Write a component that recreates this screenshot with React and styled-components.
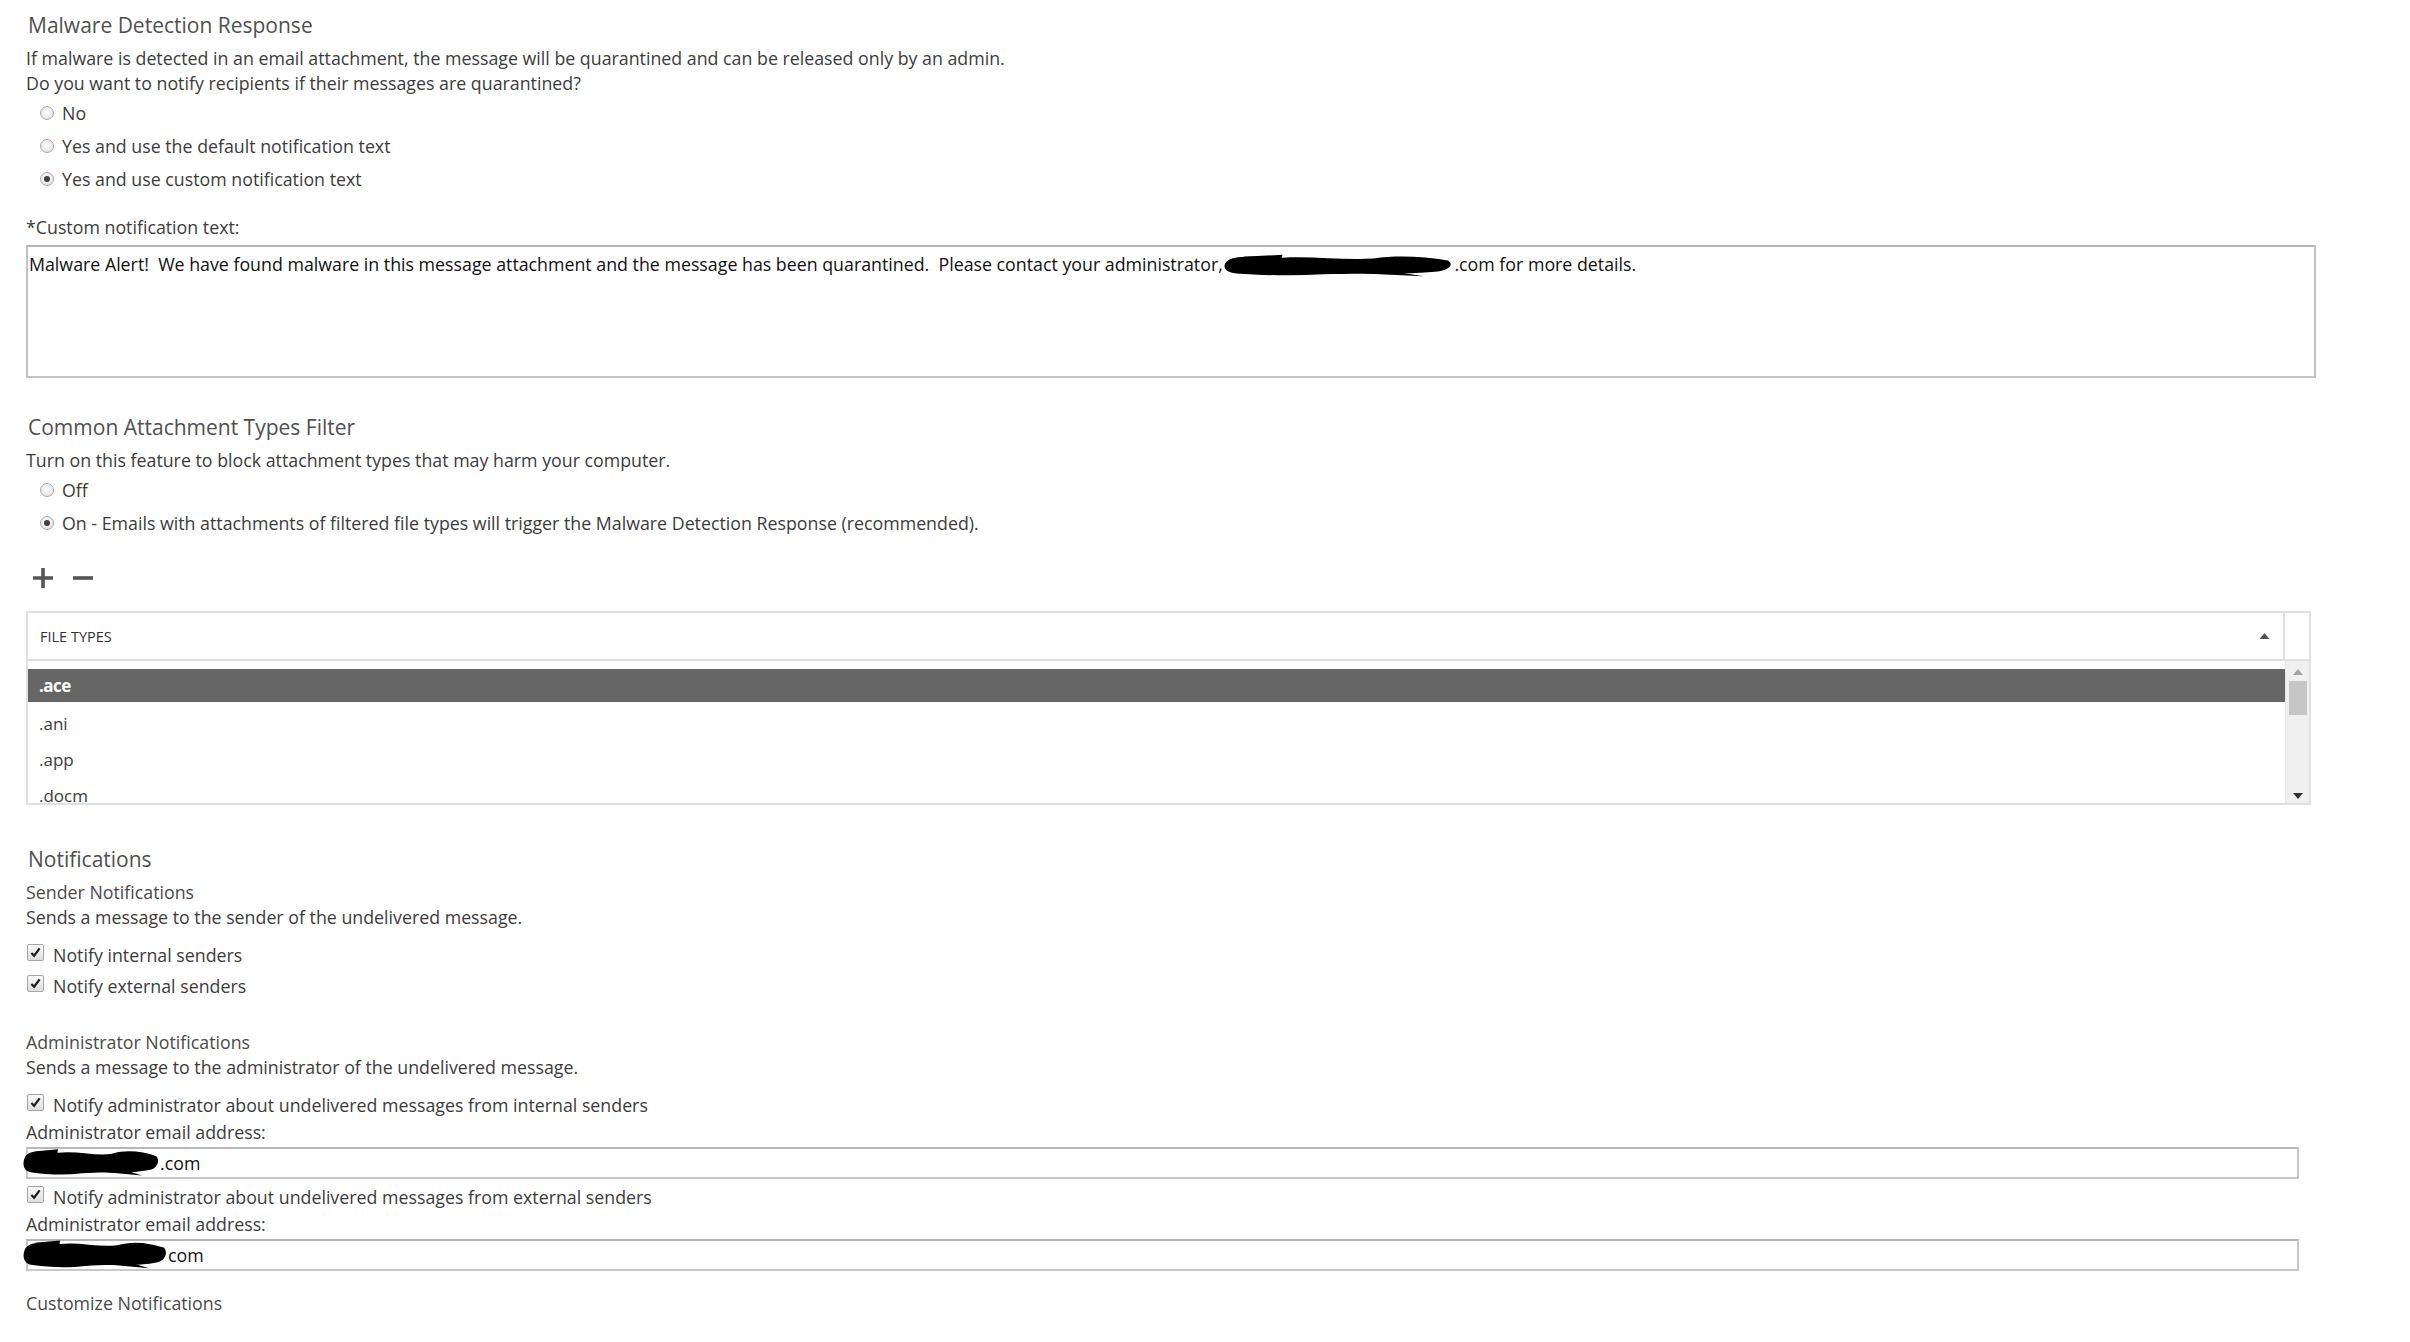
import React from "react";
import styled, { createGlobalStyle } from "styled-components";

const GlobalStyle = createGlobalStyle`
  body {
    margin: 0;
    background: #ffffff;
    font-family: "Open Sans", "Noto Sans", sans-serif;
    color: #333333;
  }
`;

const Page = styled.div`
  padding: 10px 0 20px 26px;
  width: 2290px;
`;

const Section = styled.section`
  display: flex;
  flex-direction: column;
  margin-bottom: ${(p) => p.gap || 0}px;
`;

const Heading = styled.h2`
  margin: ${(p) => p.top || 0}px 0 6px 2px;
  font-size: 21px;
  font-weight: 400;
  line-height: 30px;
  color: #505050;
`;

const Text = styled.div`
  font-size: 17.8px;
  line-height: 25px;
  color: #3c3c3c;
`;

const SubHeading = styled(Text)`
  color: #4a4a4a;
  margin-top: ${(p) => p.top || 0}px;
`;

const RadioRow = styled.label`
  display: flex;
  align-items: center;
  gap: 8px;
  height: 33px;
  padding-left: 14px;
  font-size: 17.8px;
  color: #3c3c3c;
`;

const RadioDot = styled.span`
  width: 12px;
  height: 12px;
  border-radius: 50%;
  border: 1px solid #ababab;
  background: radial-gradient(circle at 50% 40%, #fdfdfd 0%, #dedede 100%);
  display: flex;
  align-items: center;
  justify-content: center;
  box-sizing: content-box;

  &::after {
    content: "";
    width: 6px;
    height: 6px;
    border-radius: 50%;
    background: ${(p) => (p.checked ? "#404040" : "transparent")};
  }
`;

const FieldLabel = styled(Text)`
  margin-top: ${(p) => p.top || 0}px;
`;

const TextArea = styled.div`
  margin-top: 5px;
  height: 124px;
  border: 2px solid #c4c4c4;
  border-top-color: #b5b5b5;
  padding: 5px 0 0 1px;
  font-size: 17.8px;
  line-height: 25px;
  color: #111111;
  white-space: pre;
`;

const Scribble = styled.svg`
  display: inline-block;
  vertical-align: middle;
  margin: -6px 0 -6px ${(p) => p.shift || 0}px;
`;

const Tools = styled.div`
  display: flex;
  gap: 16px;
  align-items: center;
  height: 30px;
  margin: 24px 0 18px 5px;
`;

const Grid = styled.div`
  border: 2px solid #dde1e4;
  display: grid;
  grid-template-columns: 1fr 24px;
  margin-right: 5px;
`;

const HeaderCell = styled.div`
  height: 46px;
  display: flex;
  align-items: center;
  justify-content: space-between;
  padding: 0 13px 0 12px;
  font-size: 14.5px;
  color: #333333;
  border-bottom: 2px solid #dde1e4;
  border-right: ${(p) => (p.edge ? "2px solid #dde1e4" : "none")};
`;

const Body = styled.div`
  height: 142px;
  overflow: hidden;
  padding-top: 8px;
  box-sizing: border-box;
`;

const Row = styled.div`
  height: ${(p) => (p.selected ? 33 : 36)}px;
  margin-bottom: ${(p) => (p.selected ? 3 : 0)}px;
  display: flex;
  align-items: center;
  padding-left: 11px;
  font-size: 17px;
  letter-spacing: ${(p) => (p.selected ? "-0.5px" : "0")};
  background: ${(p) => (p.selected ? "#666666" : "transparent")};
  color: ${(p) => (p.selected ? "#ffffff" : "#3c3c3c")};
  font-weight: ${(p) => (p.selected ? 700 : 400)};
`;

const ScrollTrack = styled.div`
  height: 142px;
  background: #f0f0f0;
  border-left: 1px solid #e4e4e4;
  display: flex;
  flex-direction: column;
  align-items: center;
  padding: 8px 0 4px;
  box-sizing: border-box;
`;

const Thumb = styled.div`
  width: 18px;
  height: 34px;
  background: #c6c6c6;
  margin-top: 6px;
`;

const Spacer = styled.div`
  flex: 1;
`;

const CheckRow = styled.label`
  display: flex;
  align-items: center;
  gap: 9px;
  height: 31px;
  margin-top: ${(p) => p.top || 0}px;
  padding-left: 1px;
  font-size: 17.8px;
  color: #3c3c3c;
`;

const CheckBox = styled.span`
  width: 15px;
  height: 15px;
  border: 1px solid #a5a5a5;
  border-radius: 2px;
  background: linear-gradient(#fafafa, #dedede);
  display: flex;
  align-items: center;
  justify-content: center;
  margin-top: -4px;
`;

const Field = styled.div`
  height: 28px;
  margin: 2px 17px 2px 0;
  border: 2px solid #c8c8c8;
  border-top-color: #b8b8b8;
  display: flex;
  align-items: center;
  padding-left: 2px;
  font-size: 17.8px;
  color: #111111;
`;

const Footer = styled(Text)`
  margin-top: 18px;
  color: #4a4a4a;
`;

const blob =
  "M4 10 C10 2 30 4 60 5 C90 3 120 8 150 6 C175 2 200 4 224 8 C230 12 226 18 214 20 C180 24 140 21 100 23 C70 25 40 24 14 22 C4 21 0 16 4 10 Z";

const Redact = ({ w, h = 26, shift }) => (
  <Scribble width={w} height={h} viewBox="0 0 230 28" preserveAspectRatio="none" shift={shift}>
    <path d={blob} fill="#000" />
    <path d="M20 4 L60 2 L58 8 Z M140 22 L200 25 L170 20 Z" fill="#000" />
  </Scribble>
);

const Radio = ({ checked, children }) => (
  <RadioRow>
    <RadioDot checked={checked} />
    {children}
  </RadioRow>
);

const Check = ({ children, top }) => (
  <CheckRow top={top}>
    <CheckBox>
      <svg width="11" height="11" viewBox="0 0 12 12">
        <path d="M1.5 6.5 L4.5 9.5 L10.5 1.5" fill="none" stroke="#1e1e1e" strokeWidth="2.4" />
      </svg>
    </CheckBox>
    {children}
  </CheckRow>
);

const Plus = () => (
  <svg width="24" height="24" viewBox="0 0 24 24">
    <path d="M12 2 V22 M2 12 H22" stroke="#565656" strokeWidth="3.6" />
  </svg>
);

const Minus = () => (
  <svg width="24" height="24" viewBox="0 0 24 24">
    <path d="M2 12 H22" stroke="#565656" strokeWidth="3.6" />
  </svg>
);

const Triangle = ({ up, color, size = 10 }) => (
  <svg width={size} height={size * 0.6} viewBox="0 0 10 6">
    <path d={up ? "M0 6 L5 0 L10 6 Z" : "M0 0 L5 6 L10 0 Z"} fill={color} />
  </svg>
);

const fileTypes = [".ace", ".ani", ".app", ".docm"];

const App = () => (
  <Page>
    <GlobalStyle />
    <Section gap={34}>
      <Heading>Malware Detection Response</Heading>
      <Text>
        If malware is detected in an email attachment, the message will be quarantined and can be
        released only by an admin.
      </Text>
      <Text>Do you want to notify recipients if their messages are quarantined?</Text>
      <Radio>No</Radio>
      <Radio>Yes and use the default notification text</Radio>
      <Radio checked>Yes and use custom notification text</Radio>
      <FieldLabel top={20}>*Custom notification text:</FieldLabel>
      <TextArea>
        {"Malware Alert!  We have found malware in this message attachment and the message has been quarantined.  Please contact your administrator, "}
        <Redact w={232} shift={-5} />
        {".com for more details."}
      </TextArea>
    </Section>

    <Section>
      <Heading>Common Attachment Types Filter</Heading>
      <Text>Turn on this feature to block attachment types that may harm your computer.</Text>
      <Radio>Off</Radio>
      <Radio checked>
        On - Emails with attachments of filtered file types will trigger the Malware Detection
        Response (recommended).
      </Radio>
      <Tools>
        <Plus />
        <Minus />
      </Tools>
      <Grid>
        <HeaderCell edge>
          FILE TYPES
          <Triangle up color="#555" size={11} />
        </HeaderCell>
        <HeaderCell />
        <Body>
          {fileTypes.map((t, i) => (
            <Row key={t} selected={i === 0}>
              {t}
            </Row>
          ))}
        </Body>
        <ScrollTrack>
          <Triangle up color="#a4a4a4" size={10} />
          <Thumb />
          <Spacer />
          <Triangle color="#333" size={10} />
        </ScrollTrack>
      </Grid>
    </Section>

    <Section>
      <Heading top={39}>Notifications</Heading>
      <SubHeading>Sender Notifications</SubHeading>
      <Text>Sends a message to the sender of the undelivered message.</Text>
      <Check top={9}>Notify internal senders</Check>
      <Check>Notify external senders</Check>
      <SubHeading top={29}>Administrator Notifications</SubHeading>
      <Text>Sends a message to the administrator of the undelivered message.</Text>
      <Check top={9}>Notify administrator about undelivered messages from internal senders</Check>
      <FieldLabel>Administrator email address:</FieldLabel>
      <Field>
        <Redact w={138} h={32} shift={-8} />
        .com
      </Field>
      <Check>Notify administrator about undelivered messages from external senders</Check>
      <FieldLabel>Administrator email address:</FieldLabel>
      <Field>
        <Redact w={146} h={34} shift={-8} />
        com
      </Field>
      <Footer>Customize Notifications</Footer>
    </Section>
  </Page>
);

export default App;
